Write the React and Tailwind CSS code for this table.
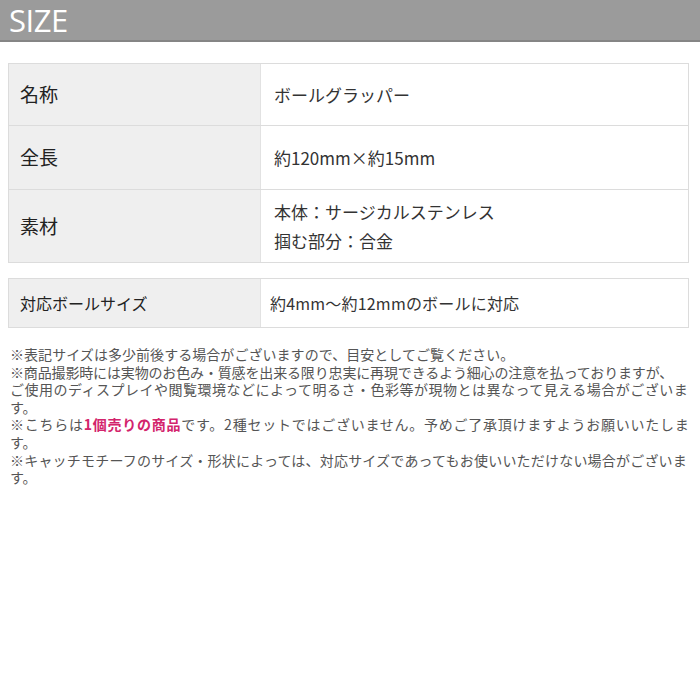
const jp = "font-['Noto_Sans_CJK_JP','Noto_Sans',sans-serif]";

const specs = [
  { label: '名称', value: ['ボールグラッパー'], h: 'h-[61px]' },
  { label: '全長', value: ['約120mm×約15mm'], h: 'h-[64px]' },
  { label: '素材', value: ['本体：サージカルステンレス', '掴む部分：合金'], h: 'h-[73px]' },
];

export default function App() {
  return (
    <div className={`w-[700px] h-[700px] bg-white text-[#333] ${jp}`}>
      <div className="h-[42px] bg-[#9b9b9b] border-b-2 border-[#858585] flex items-center pl-[9px]">
        <h1 className="text-white text-[31px] leading-none font-['Open_Sans','Noto_Sans',sans-serif] tracking-[-0.5px]">SIZE</h1>
      </div>

      <div className="mx-[8px] mt-[21px] w-[681px] border border-[#dcdcdc]">
        {specs.map((row, i) => (
          <div key={row.label} className={`flex ${row.h} ${i > 0 ? 'border-t border-[#dcdcdc]' : ''}`}>
            <div className="w-[252px] bg-[#efefef] border-r border-[#e2e2e2] flex items-center pl-[11px] text-[19px] text-[#222]">
              {row.label}
            </div>
            <div className="flex-1 flex flex-col justify-center pl-[13px] text-[17px] leading-[29px] text-[#333]">
              {row.value.map((v) => (
                <span key={v}>{v}</span>
              ))}
            </div>
          </div>
        ))}
      </div>

      <div className="mx-[8px] mt-[15px] w-[681px] h-[50px] border border-[#dcdcdc] flex">
        <div className="w-[252px] bg-[#efefef] border-r border-[#e2e2e2] flex items-center pl-[11px] text-[16px] text-[#222]">
          対応ボールサイズ
        </div>
        <div className="flex-1 flex items-center pl-[9px] text-[16px] tracking-[0.2px] text-[#333]">
          約4mm～約12mmのボールに対応
        </div>
      </div>

      {/* 注意書き: 参考画像の折り返し位置に合わせて行ごとに字間を調整 */}
      <div className="mt-[18px] pl-[10px] text-[14px] leading-[17.6px] text-[#555] whitespace-nowrap">
        <p className="tracking-[0.05px]">※表記サイズは多少前後する場合がございますので、目安としてご覧ください。</p>
        <p className="tracking-[-0.15px]">※商品撮影時には実物のお色み・質感を出来る限り忠実に再現できるよう細心の注意を払っておりますが、</p>
        <p className="tracking-[0.5px]">ご使用のディスプレイや閲覧環境などによって明るさ・色彩等が現物とは異なって見える場合がございま</p>
        <p>す。</p>
        <p className="tracking-[0.75px]">
          ※こちらは<span className="text-[#d3246c] font-bold">1個売りの商品</span>です。2種セットではございません。予めご了承頂けますようお願いいたしま
        </p>
        <p>す。</p>
        <p className="tracking-[0.2px]">※キャッチモチーフのサイズ・形状によっては、対応サイズであってもお使いいただけない場合がございま</p>
        <p>す。</p>
      </div>
    </div>
  );
}
